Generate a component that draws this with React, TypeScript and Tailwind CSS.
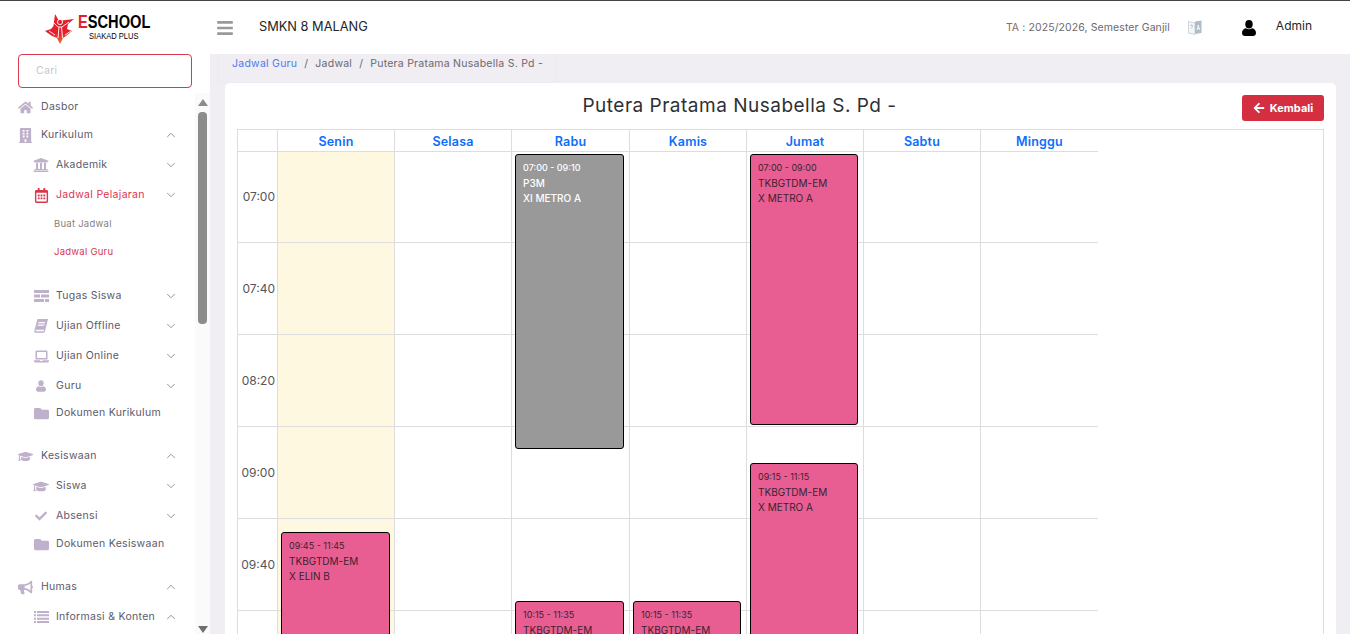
import type { ReactNode } from "react";
import { ChevronDown, ChevronUp } from "lucide-react";
import {
  FaArrowLeft,
  FaBars,
  FaBuilding,
  FaBullhorn,
  FaCheck,
  FaFolder,
  FaGraduationCap,
  FaHome,
  FaLaptop,
  FaRegCalendarAlt,
  FaUniversity,
} from "react-icons/fa";

function TasksIcon() {
  return (
    <svg width="15" height="12" viewBox="0 0 15 12" fill="currentColor">
      <path d="M0 0h15v3H0zM0 4.500h6v3H0zM7 4.500h8v3H7zM0 9h10v3H0zM11 9h4v3h-4z" />
    </svg>
  );
}

function BookIcon() {
  return (
    <svg width="14" height="15" viewBox="0 0 14 15" fill="currentColor">
      <path d="M3.500 0H14l-.5 2-2.600 10.500c-.2.800-.8 1.200-1.600 1.200H1.800C.6 13.700 0 12.800.3 11.700zM4.600 3l-.3 1.200h6.500l.3-1.200zM4 5.500l-.3 1.200h6.500l.3-1.200zM2.300 10.700c-.4 0-.8.300-.8.800s.3.800.8.800h7.400l.4-1.600z" fillRule="evenodd" />
    </svg>
  );
}

function UserIcon({ w, h }: { w: number; h: number }) {
  return (
    <svg width={w} height={h} viewBox="0 0 14 16" fill="currentColor">
      <ellipse cx="7" cy="4.200" rx="3.700" ry="4.200" />
      <path d="M3.800 8.200C5.700 9.600 8.300 9.600 10.200 8.200 12.600 8.700 14 10.600 14 13c0 1.800-1.300 3-3 3H3c-1.700 0-3-1.200-3-3 0-2.400 1.400-4.300 3.800-4.800z" />
    </svg>
  );
}

function ListIcon() {
  return (
    <svg width="15" height="12" viewBox="0 0 15 12" fill="currentColor">
      <path d="M0 0h2v2H0zM3 0h12v2H3zM0 3.300h2v2H0zM3 3.300h12v2H3zM0 6.700h2v2H0zM3 6.700h12v2H3zM0 10h2v2H0zM3 10h12v2H3z" />
    </svg>
  );
}

function TranslateIcon() {
  return (
    <svg width="14" height="15" viewBox="0 0 14 15" className="ml-[18px]">
      <path d="M0.500 1.500 7 3v11.500l-6.500-1.500z" fill="#f4f6f8" stroke="#c3ccd4" strokeWidth="0.8" />
      <path d="M7 1.500 13.500 0.500v12.500L7 14z" fill="#aebdca" />
      <path d="M9 10l1.300-5 1.300 5M9.500 8.500h1.700" stroke="#fff" strokeWidth="0.8" fill="none" />
      <path d="M2 5.500h3M3.500 4.500v1M2.500 9c1.200-.8 2-2 2.200-3.500" stroke="#b0bac4" strokeWidth="0.7" fill="none" />
    </svg>
  );
}

type NavRow = {
  label: string;
  icon?: ReactNode;
  level: 0 | 1 | 2;
  caret?: "up" | "down";
  active?: boolean;
  box: string;
};

const nav: NavRow[] = [
  { label: "Dasbor", icon: <FaHome />, level: 0, box: "h-[28px]" },
  { label: "Kurikulum", icon: <FaBuilding />, level: 0, caret: "up", box: "h-[28px]" },
  { label: "Akademik", icon: <FaUniversity className="text-[16px]" />, level: 1, caret: "down", box: "h-[30px] mt-px" },
  { label: "Jadwal Pelajaran", icon: <FaRegCalendarAlt />, level: 1, caret: "down", active: true, box: "h-[30px]" },
  { label: "Buat Jadwal", level: 2, box: "h-[28px]" },
  { label: "Jadwal Guru", level: 2, active: true, box: "h-[28px]" },
  { label: "Tugas Siswa", icon: <TasksIcon />, level: 1, caret: "down", box: "h-[30px] mt-[15px]" },
  { label: "Ujian Offline", icon: <BookIcon />, level: 1, caret: "down", box: "h-[30px]" },
  { label: "Ujian Online", icon: <FaLaptop />, level: 1, caret: "down", box: "h-[30px]" },
  { label: "Guru", icon: <UserIcon w={10} h={12} />, level: 1, caret: "down", box: "h-[30px]" },
  { label: "Dokumen Kurikulum", icon: <FaFolder />, level: 1, box: "h-[24px]" },
  { label: "Kesiswaan", icon: <FaGraduationCap className="text-[17px]" />, level: 0, caret: "up", box: "h-[28px] mt-[17px]" },
  { label: "Siswa", icon: <FaGraduationCap className="text-[17px]" />, level: 1, caret: "down", box: "h-[30px] mt-px" },
  { label: "Absensi", icon: <FaCheck className="text-[12px]" />, level: 1, caret: "down", box: "h-[30px]" },
  { label: "Dokumen Kesiswaan", icon: <FaFolder />, level: 1, box: "h-[24px] mt-px" },
  { label: "Humas", icon: <FaBullhorn />, level: 0, caret: "up", box: "h-[28px] mt-[17px]" },
  { label: "Informasi & Konten", icon: <ListIcon />, level: 1, caret: "up", box: "h-[30px] mt-px" },
];

const days = [
  { name: "Senin", w: "w-[117px]", today: true },
  { name: "Selasa", w: "w-[117px]" },
  { name: "Rabu", w: "w-[118px]" },
  { name: "Kamis", w: "w-[117px]" },
  { name: "Jumat", w: "w-[117px]" },
  { name: "Sabtu", w: "w-[117px]" },
  { name: "Minggu", w: "w-[117px]" },
];

// the last row only shows its top part, its label falls below the window
const slots = ["07:00", "07:40", "08:20", "09:00", "09:40", ""];

type Ev = { time: string; title: string; kelas: string; top: string; height: string; width: string; gray?: boolean };

// top is measured from the first grid line, one event list per day
const events: Record<string, Ev[]> = {
  Senin: [{ time: "09:45 - 11:45", title: "TKBGTDM-EM", kelas: "X ELIN B", top: "top-[380px]", height: "h-[300px]", width: "w-[109px]" }],
  Rabu: [
    { time: "07:00 - 09:10", title: "P3M", kelas: "XI METRO A", top: "top-[2px]", height: "h-[295px]", width: "w-[109px]", gray: true },
    { time: "10:15 - 11:35", title: "TKBGTDM-EM", kelas: "", top: "top-[449px]", height: "h-[200px]", width: "w-[109px]" },
  ],
  Kamis: [{ time: "10:15 - 11:35", title: "TKBGTDM-EM", kelas: "", top: "top-[449px]", height: "h-[200px]", width: "w-[108px]" }],
  Jumat: [
    { time: "07:00 - 09:00", title: "TKBGTDM-EM", kelas: "X METRO A", top: "top-[2px]", height: "h-[271px]", width: "w-[108px]" },
    { time: "09:15 - 11:15", title: "TKBGTDM-EM", kelas: "X METRO A", top: "top-[311px]", height: "h-[300px]", width: "w-[108px]" },
  ],
};

function Logo() {
  return (
    <div className="flex items-center h-[53px] pl-[45px] shrink-0">
      <svg width="30" height="30" viewBox="0 0 30 30" className="mt-[3px] shrink-0">
        <defs>
          <linearGradient id="logoRed" x1="0" y1="0" x2="0" y2="1">
            <stop offset="0.65" stopColor="#e3202e" />
            <stop offset="1" stopColor="#f2762e" />
          </linearGradient>
        </defs>
        <path d="M10 0 L13.500 6 L17 6.500 L29 5 L23 10 L22 15 L27 17 L21 22 L18 24 L15 30 L12 24 L7 22 L0 17 L6 15 L8.500 12 Z" fill="url(#logoRed)" />
        <circle cx="15" cy="8" r="2.600" fill="#e3202e" stroke="#fff" strokeWidth="0.9" />
        <path d="M9 9 L13 13 L17 13 L24 8 M14 13 L13 24 M16.500 13 L17.500 24 M4 17 L10 21 M26 17 L20 21" stroke="#fff" strokeWidth="0.9" fill="none" />
      </svg>
      <div className="ml-[3px] -mt-[1px] w-[72px] flex flex-col font-['Liberation_Sans',sans-serif] text-black whitespace-nowrap">
        <div className="text-[19px] font-bold leading-[17px] origin-left scale-x-[0.77]">
          <span className="text-[#e3202e]">E</span>SCHOOL
        </div>
        <div className="text-[9.7px] leading-[10px] mt-[1px] ml-[11px] origin-left scale-x-[0.78]">SIAKAD PLUS</div>
      </div>
    </div>
  );
}

function Sidebar() {
  return (
    <aside className="w-[210px] shrink-0 flex flex-col bg-white h-full">
      <Logo />
      <div className="ml-[18px] w-[174px] h-[34px] shrink-0 border border-[#d8394c] rounded-[4px] flex items-center pl-[17px] text-[10.5px] text-[#c9c6cf] tracking-[0.3px]">
        Cari
      </div>
      <div className="flex flex-1 min-h-0 mt-[5px]">
        <nav className="w-[195px] shrink-0 overflow-hidden">
          {nav.map((row) => {
            const color = row.active ? "text-[#d9364f]" : "text-[#5d5a6b]";
            if (row.level === 2) {
              return (
                <div key={row.label} className={`${row.box} flex items-center pl-[54px] text-[9.5px] tracking-[0.25px] ${row.active ? "text-[#d9364f]" : "text-[#8a7f80]"}`}>
                  {row.label}
                </div>
              );
            }
            return (
              <div key={row.label} className={`${row.box} flex items-center ${row.level === 0 ? "pl-[18px]" : "pl-[33px]"}`}>
                <span className={`flex justify-center text-[15px] ${row.level === 0 ? "w-[15px] mr-[8px]" : "w-[16px] mr-[7px]"} ${row.active ? "text-[#d9364f]" : "text-[#bfb0cb]"}`}>
                  {row.icon}
                </span>
                <span className={`flex-1 text-[10.5px] tracking-[0.3px] whitespace-nowrap ${color}`}>{row.label}</span>
                {row.caret && (
                  <span className="w-[14px] mr-[17px] text-[#8e8a99]">
                    {row.caret === "up" ? <ChevronUp size={14} strokeWidth={1.6} /> : <ChevronDown size={14} strokeWidth={1.6} />}
                  </span>
                )}
              </div>
            );
          })}
        </nav>
        <div className="w-[15px] shrink-0 bg-[#fafafa] flex flex-col items-center">
          <div className="mt-[6px] w-0 h-0 border-x-[5px] border-x-transparent border-b-[7px] border-b-[#8c8c8c]" />
          <div className="mt-[6px] w-[9px] h-[212px] rounded-[4px] bg-[#8c8c8c]" />
          <div className="mt-auto mb-[1px] w-0 h-0 border-x-[5px] border-x-transparent border-t-[7px] border-t-[#6f6f6f]" />
        </div>
      </div>
    </aside>
  );
}

function Header() {
  return (
    <header className="h-[53px] shrink-0 bg-white flex items-center">
      <FaBars className="ml-[6px] text-[#9a9a9a] text-[18px]" />
      <div className="ml-[25px] text-[12.8px] text-[#212529] -mt-[2px]">SMKN 8 MALANG</div>
      <div className="ml-auto text-[10.5px] tracking-[0.1px] text-[#6a6a72]">
        <span className="text-[#8a6d5d]">TA</span> : 2025/2026, Semester Ganjil
      </div>
      <TranslateIcon />
      <div className="ml-[40px] text-black mt-[1px]">
        <UserIcon w={14} h={16} />
      </div>
      <div className="ml-[20px] mr-[38px] text-[12px] text-[#212529] -mt-[3px]">Admin</div>
    </header>
  );
}

function EventBox({ ev }: { ev: Ev }) {
  return (
    <div
      className={`absolute z-10 left-[3px] ${ev.top} ${ev.height} ${ev.width} border border-black rounded-[3px] pl-[7px] pt-[6px] overflow-hidden ${
        ev.gray ? "bg-[#999999] text-white font-medium" : "bg-[#e95e92] text-[#3a2230]"
      }`}
    >
      <div className="text-[9px] leading-[13px]">{ev.time}</div>
      <div className="text-[10px] leading-[15px] mt-[2px]">{ev.title}</div>
      <div className="text-[10px] leading-[15px]">{ev.kelas}</div>
    </div>
  );
}

function Calendar() {
  return (
    <div className="border border-[#dddddd] border-b-0 h-[600px]">
      <div className="flex w-[860px]">
        <div className="w-[40px] h-[22px] border-b border-r border-[#dddddd]" />
        {days.map((d) => (
          <div key={d.name} className={`${d.w} h-[22px] pt-[3px] border-b border-r last:border-r-0 border-[#dddddd] flex items-center justify-center text-[12.5px] font-semibold tracking-[0.2px] text-[#0d6efd]`}>
            {d.name}
          </div>
        ))}
      </div>
      <div className="flex w-[860px]">
        <div className="w-[40px] shrink-0 border-r border-[#dddddd]">
          {slots.map((s, i) => (
            <div key={i} className={`${i === 0 ? "h-[91px]" : "h-[92px]"} border-b border-[#dddddd] flex items-center justify-end pr-[2px] text-[12px] text-[#555555]`}>
              {s}
            </div>
          ))}
        </div>
        {days.map((d) => (
          <div key={d.name} className={`${d.w} relative border-r last:border-r-0 border-[#dddddd] ${d.today ? "bg-[#fef8e1]" : ""}`}>
            {slots.map((_, i) => (
              <div key={i} className={`${i === 0 ? "h-[91px]" : "h-[92px]"} border-b border-[#dddddd]`} />
            ))}
            {(events[d.name] ?? []).map((ev) => (
              <EventBox key={ev.time} ev={ev} />
            ))}
          </div>
        ))}
      </div>
    </div>
  );
}

export default function App() {
  return (
    <div className="h-screen overflow-hidden border-t border-[#444444] flex bg-white font-['Inter',sans-serif]">
      <Sidebar />
      <div className="flex-1 min-w-0 flex flex-col">
        <Header />
        <main className="flex-1 min-h-0 bg-[#f0edf3] overflow-hidden pl-[15px] pr-[14px]">
          <div className="-ml-[7px] w-fit h-[29px] border-x border-b border-[#ece9ef] rounded-b-[3px] flex items-center pl-[13px] pr-[13px] pb-[8px] text-[10.5px] tracking-[0.25px] text-[#6a6a72] gap-[7px] whitespace-nowrap">
            <span className="text-[#4a7df0]">Jadwal Guru</span>
            <span>/</span>
            <span>Jadwal</span>
            <span>/</span>
            <span>Putera Pratama Nusabella S. Pd -</span>
          </div>
          <section className="bg-white rounded-t-[5px] px-[12px] h-[600px]">
            <div className="h-[46px] flex items-start">
              <h1 className="flex-1 text-center text-[19px] leading-[46px] text-[#2f3033] tracking-[0.5px]">Putera Pratama Nusabella S. Pd -</h1>
              <button className="mt-[12px] w-[82px] h-[26px] rounded-[3px] bg-[#d32f41] text-white flex items-center justify-center gap-[5px] text-[11px] font-bold">
                <FaArrowLeft className="text-[12px]" />
                Kembali
              </button>
            </div>
            <Calendar />
          </section>
        </main>
      </div>
    </div>
  );
}
